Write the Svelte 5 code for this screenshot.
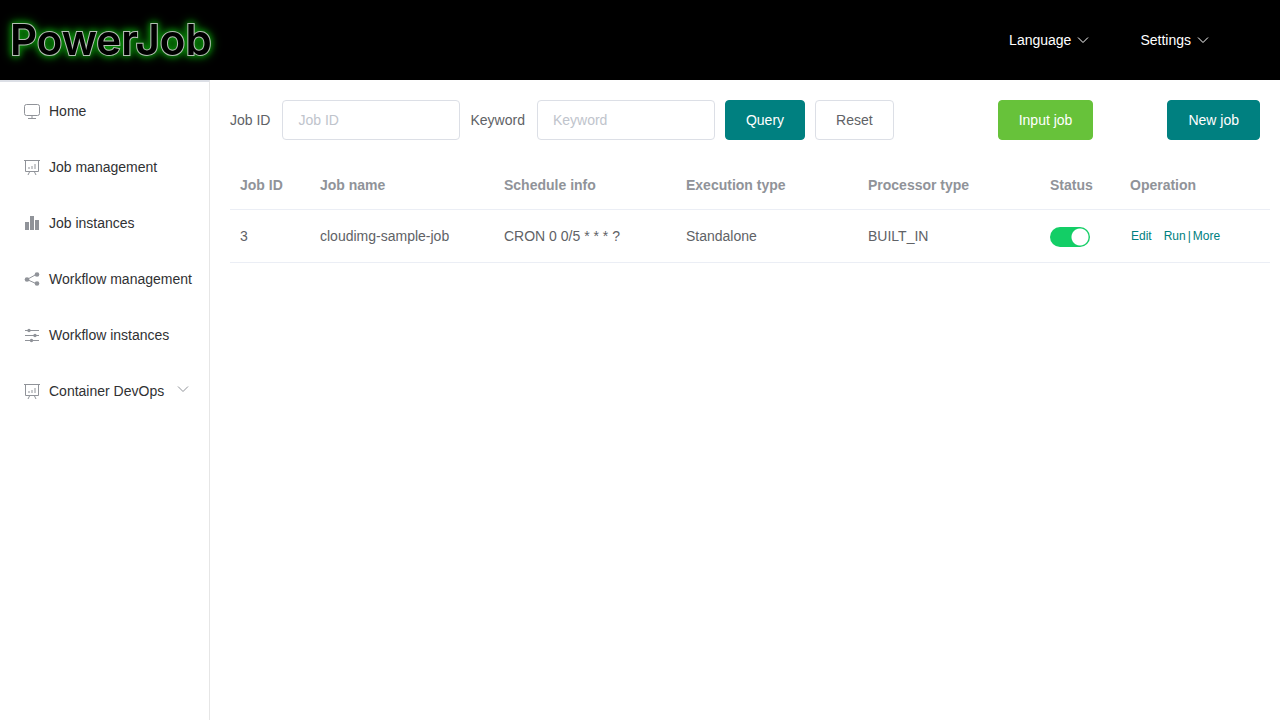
<script lang="ts">
	type MenuItem = { label: string; icon: string; children?: boolean };

	const menu: MenuItem[] = [
		{ label: 'Home', icon: 'monitor' },
		{ label: 'Job management', icon: 'board' },
		{ label: 'Job instances', icon: 'bars' },
		{ label: 'Workflow management', icon: 'share' },
		{ label: 'Workflow instances', icon: 'sliders' },
		{ label: 'Container DevOps', icon: 'board', children: true }
	];

	let jobs = $state([
		{
			id: 3,
			name: 'cloudimg-sample-job',
			schedule: 'CRON 0 0/5 * * * ?',
			execution: 'Standalone',
			processor: 'BUILT_IN',
			enabled: true
		}
	]);

	let jobId = $state('');
	let keyword = $state('');

	function reset() {
		jobId = '';
		keyword = '';
	}
</script>

{#snippet chevron()}
	<svg class="chevron" viewBox="0 0 12 12" aria-hidden="true">
		<path d="M1 3.5 6 8.5 11 3.5" />
	</svg>
{/snippet}

{#snippet menuIcon(name: string)}
	<svg class="icon" viewBox="0 0 18 18" aria-hidden="true">
		{#if name === 'monitor'}
			<rect x="1.5" y="2.5" width="15" height="11" rx="2" />
			<path d="M9 13.5v3M5 16.5h8" />
		{:else if name === 'board'}
			<path d="M1 2.5h16M2.5 2.5v11h13v-11M6.5 14 5 17M11.5 14 13 17" />
			<path d="M6 9v2M9 8v3M12 6v5" />
		{:else if name === 'bars'}
			<path class="solid" d="M2 8h4v8H2zM7 2h4v14H7zM12 6h4v10h-4z" />
		{:else if name === 'share'}
			<path d="M14 4 4 9.5 14 14" />
			<circle class="solid" cx="4" cy="9.5" r="2.3" />
			<circle class="solid" cx="14" cy="4.5" r="2.3" />
			<circle class="solid" cx="14" cy="13.5" r="2.3" />
		{:else}
			<path d="M2 4.5h14M2 9.5h14M2 14.5h14" />
			<circle class="solid" cx="6" cy="4.5" r="1.7" />
			<circle class="solid" cx="12" cy="9.5" r="1.7" />
			<circle class="solid" cx="8.5" cy="14.5" r="1.7" />
		{/if}
	</svg>
{/snippet}

<div class="app">
	<header>
		<a href="#home" class="logo">PowerJob</a>
		<nav class="top-nav">
			<button type="button">Language {@render chevron()}</button>
			<button type="button">Settings {@render chevron()}</button>
		</nav>
	</header>

	<div class="body">
		<aside>
			<nav>
				{#each menu as item}
					<a href="#{item.icon}" class="menu-item">
						{@render menuIcon(item.icon)}
						<span>{item.label}</span>
						{#if item.children}
							{@render chevron()}
						{/if}
					</a>
				{/each}
			</nav>
		</aside>

		<main>
			<form class="toolbar" onsubmit={(e) => e.preventDefault()}>
				<label for="job-id">Job ID</label>
				<input id="job-id" type="text" placeholder="Job ID" bind:value={jobId} />
				<label for="keyword">Keyword</label>
				<input id="keyword" type="text" placeholder="Keyword" bind:value={keyword} />
				<button type="submit" class="btn primary">Query</button>
				<button type="button" class="btn" onclick={reset}>Reset</button>
				<div class="actions">
					<button type="button" class="btn success">Input job</button>
					<button type="button" class="btn primary">New job</button>
				</div>
			</form>

			<table>
				<colgroup>
					<col class="narrow" />
					<col class="name-col" />
					<col />
					<col />
					<col />
					<col class="narrow" />
					<col class="ops-col" />
				</colgroup>
				<thead>
					<tr>
						<th>Job ID</th>
						<th>Job name</th>
						<th>Schedule info</th>
						<th>Execution type</th>
						<th>Processor type</th>
						<th>Status</th>
						<th>Operation</th>
					</tr>
				</thead>
				<tbody>
					{#each jobs as job}
						<tr>
							<td>{job.id}</td>
							<td>{job.name}</td>
							<td>{job.schedule}</td>
							<td>{job.execution}</td>
							<td>{job.processor}</td>
							<td>
								<input
									type="checkbox"
									class="switch"
									aria-label="Status"
									bind:checked={job.enabled}
								/>
							</td>
							<td>
								<div class="ops">
									<button type="button" class="edit">Edit</button>
									<button type="button">Run</button>
									<span>|</span>
									<button type="button">More</button>
								</div>
							</td>
						</tr>
					{/each}
				</tbody>
			</table>
		</main>
	</div>
</div>

<style>
	:global(body) {
		margin: 0;
	}

	.app {
		display: flex;
		flex-direction: column;
		min-height: 100vh;
		background: #fff;
		color: #606266;
		font-family: 'Liberation Sans', Arial, sans-serif;
		font-size: 14px;
	}

	button,
	input {
		font: inherit;
		box-sizing: border-box;
	}

	header {
		display: flex;
		align-items: center;
		justify-content: space-between;
		height: 80px;
		padding: 0 71px 0 10px;
		background: #000;
	}

	.logo {
		color: #000;
		font-family: Inter, sans-serif;
		font-size: 42px;
		font-weight: 600;
		line-height: 48px;
		text-decoration: none;
		-webkit-text-stroke: 2px #b4bfb4;
		paint-order: stroke fill;
		filter: drop-shadow(0 0 3px #078a07) drop-shadow(0 0 4px #067006);
	}

	.top-nav {
		display: flex;
		gap: 51px;
	}

	.top-nav button {
		display: flex;
		align-items: center;
		gap: 6px;
		padding: 0;
		border: 0;
		background: none;
		color: #fff;
		cursor: pointer;
	}

	.chevron {
		width: 12px;
		height: 12px;
		fill: none;
		stroke: currentColor;
		stroke-width: 1;
	}

	.body {
		display: flex;
		flex: 1;
	}

	aside {
		box-sizing: border-box;
		flex: 0 0 210px;
		border-top: 2px solid #dcdfe6;
		border-right: 1px solid #e6e6e6;
	}

	.menu-item {
		display: flex;
		align-items: center;
		height: 56px;
		padding: 1px 16px 0 23px;
		box-sizing: border-box;
		color: #303133;
		text-decoration: none;
		white-space: nowrap;
	}

	.icon {
		flex: none;
		width: 18px;
		height: 18px;
		margin-right: 8px;
		fill: none;
		stroke: #909399;
		stroke-width: 1;
	}

	.solid {
		fill: #909399;
		stroke: none;
	}

	.menu-item .chevron {
		margin: 0 4px 4px auto;
		color: #909399;
	}

	main {
		flex: 1;
		min-width: 0;
		padding: 20px 10px 20px 20px;
	}

	.toolbar {
		display: flex;
		align-items: center;
		padding-right: 10px;
	}

	.toolbar label {
		margin-right: 12px;
	}

	.toolbar input {
		width: 178px;
		height: 40px;
		margin-right: 10px;
		padding: 0 15px;
		border: 1px solid #dcdfe6;
		border-radius: 4px;
		color: #606266;
		outline: none;
	}

	.toolbar input::placeholder {
		color: #c0c4cc;
	}

	.btn {
		height: 40px;
		margin-right: 10px;
		padding: 0 20px;
		border: 1px solid #dcdfe6;
		border-radius: 4px;
		background: #fff;
		color: #606266;
		cursor: pointer;
	}

	.btn.primary {
		border-color: #008080;
		background: #008080;
		color: #fff;
	}

	.btn.success {
		border-color: #67c23a;
		background: #67c23a;
		color: #fff;
	}

	.actions {
		display: flex;
		gap: 74px;
		margin-left: auto;
	}

	.actions .btn {
		margin: 0;
	}

	table {
		width: 100%;
		margin-top: 20px;
		border-collapse: separate;
		border-spacing: 0;
		table-layout: fixed;
	}

	.narrow {
		width: 80px;
	}

	.name-col {
		width: 184px;
	}

	.ops-col {
		width: 150px;
	}

	th,
	td {
		box-sizing: border-box;
		padding: 0 10px;
		border-bottom: 1px solid #ebeef5;
		text-align: left;
	}

	th {
		height: 50px;
		color: #909399;
	}

	td {
		height: 53px;
	}

	.switch {
		display: block;
		width: 40px;
		height: 20px;
		margin: 2px 0 0;
		border-radius: 10px;
		background: radial-gradient(circle at 30px 10px, #fff 8px, transparent 9px) #13ce66;
		appearance: none;
		cursor: pointer;
	}

	.switch:not(:checked) {
		background: radial-gradient(circle at 10px 10px, #fff 8px, transparent 9px) #dcdfe6;
	}

	.ops {
		display: flex;
		align-items: center;
		gap: 2px;
		color: #008080;
		font-size: 12px;
	}

	.ops button {
		padding: 0;
		border: 0;
		background: none;
		color: inherit;
		cursor: pointer;
	}

	.ops .edit {
		margin: 0 10px 0 1px;
	}
</style>
